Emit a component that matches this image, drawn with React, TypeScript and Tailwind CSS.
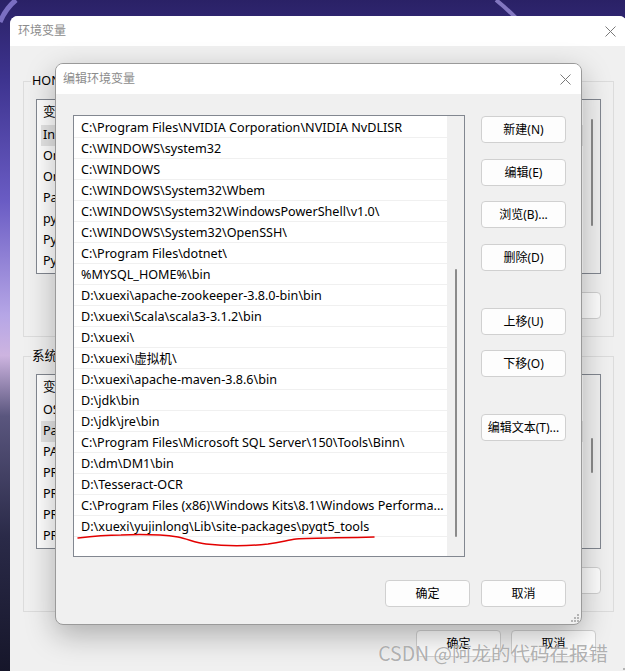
import React from "react"

const paths = [
  "C:\\Program Files\\NVIDIA Corporation\\NVIDIA NvDLISR",
  "C:\\WINDOWS\\system32",
  "C:\\WINDOWS",
  "C:\\WINDOWS\\System32\\Wbem",
  "C:\\WINDOWS\\System32\\WindowsPowerShell\\v1.0\\",
  "C:\\WINDOWS\\System32\\OpenSSH\\",
  "C:\\Program Files\\dotnet\\",
  "%MYSQL_HOME%\\bin",
  "D:\\xuexi\\apache-zookeeper-3.8.0-bin\\bin",
  "D:\\xuexi\\Scala\\scala3-3.1.2\\bin",
  "D:\\xuexi\\",
  "D:\\xuexi\\虚拟机\\",
  "D:\\xuexi\\apache-maven-3.8.6\\bin",
  "D:\\jdk\\bin",
  "D:\\jdk\\jre\\bin",
  "C:\\Program Files\\Microsoft SQL Server\\150\\Tools\\Binn\\",
  "D:\\dm\\DM1\\bin",
  "D:\\Tesseract-OCR",
  "C:\\Program Files (x86)\\Windows Kits\\8.1\\Windows Performa...",
  "D:\\xuexi\\yujinlong\\Lib\\site-packages\\pyqt5_tools",
]

const userVars = ["IntelliJ IDEA", "OneDrive", "OneDriveConsumer", "Path", "pycharm", "PyCharm", "PyCharm Community Edition"]
const sysVars = ["OS", "Path", "PATHEXT", "PROCESSOR_ARCHITECTURE", "PROCESSOR_IDENTIFIER", "PROCESSOR_LEVEL", "PROCESSOR_REVISION"]

function CloseIcon() {
  return (
    <svg width="11" height="11" viewBox="0 0 11 11">
      <path d="M0.5 0.5 L10.5 10.5 M10.5 0.5 L0.5 10.5" stroke="#7a7a7a" strokeWidth="1" />
    </svg>
  )
}

function Grip() {
  const dots = [
    [6, 0],
    [6, 3],
    [3, 3],
    [6, 6],
    [3, 6],
    [0, 6],
  ]
  return (
    <svg width="8" height="8" viewBox="0 0 8 8">
      {dots.map(([x, y], i) => (
        <rect key={i} x={x} y={y} width="2" height="2" fill="#b4b4b4" />
      ))}
    </svg>
  )
}

function Btn({ label, className = "" }: { label: string; className?: string }) {
  return (
    <div
      className={`flex h-[27px] w-[85px] shrink-0 items-center justify-center rounded-[4px] border border-[#d0d0d0] bg-[#fdfdfd] text-[12px] text-black ${className}`}
    >
      {label}
    </div>
  )
}

// variable list of the outer (background) window
function VarList({ items, selected, thumbTop, thumbHeight }: { items: string[]; selected: number; thumbTop: string; thumbHeight: string }) {
  return (
    <div className="flex h-[175px] border border-[#828790] bg-white">
      <div className="flex-1 overflow-hidden">
        <div className="flex h-[25px] items-center pl-[6px] text-[12.6px]">
          <span className="w-[200px]">变量</span>
          <span>值</span>
        </div>
        {items.map((v, i) => (
          <div
            key={v}
            className={`ml-[4px] flex h-[21px] items-center pl-[2px] text-[12.6px] ${i === selected ? "bg-[#e5e5e5]" : ""}`}
          >
            {v}
          </div>
        ))}
      </div>
      <div className="flex w-[17px] flex-col items-center bg-[#f0f0f0]">
        <div className={`w-[2px] rounded-full bg-[#8b8b8b] ${thumbTop} ${thumbHeight}`} />
      </div>
    </div>
  )
}

function GroupBox({ label, children }: { label: string; children: React.ReactNode }) {
  return (
    <div className="relative border border-[#dcdcdc] px-[12px] pb-[17px] pt-[17px]">
      <span className="absolute -top-[9px] left-[7px] bg-[#f0f0f0] px-[1px] text-[12.6px] leading-[16px] text-black">{label}</span>
      {children}
    </div>
  )
}

export default function App() {
  return (
    <div className="relative h-[671px] w-[625px] overflow-hidden bg-[linear-gradient(to_bottom,#2a2166_0%,#3e3490_12%,#6a5cc4_30%,#b6a6e6_47%,#cdb4e0_53%,#5a567e_62%,#2a2a48_80%,#16162a_100%)] font-['Noto_Sans','Noto_Sans_CJK_SC',sans-serif]">
      {/* wallpaper streaks */}
      <svg className="absolute left-0 top-0" width="625" height="40" viewBox="0 0 625 40">
        <path d="M0 22 Q6 8 16 0" stroke="#8f82d8" strokeWidth="5" fill="none" opacity="0.8" />
        <path d="M496 0 Q506 8 516 18" stroke="#a89be6" strokeWidth="4" fill="none" opacity="0.7" />
      </svg>

      {/* outer window: 环境变量 */}
      <div className="relative ml-[10px] mt-[16px] h-[660px] w-[617px] overflow-hidden rounded-t-[8px] bg-[#f0f0f0]">
        <div className="flex h-[30px] items-center justify-between bg-white pl-[8px] pr-[11px]">
          <span className="text-[12px] text-[#8c8c8c]">环境变量</span>
          <CloseIcon />
        </div>
        <div className="px-[13px] pt-[35px]">
          <GroupBox label="HONOR 的用户变量(U)">
            <VarList items={userVars} selected={0} thumbTop="mt-[19px]" thumbHeight="h-[107px]" />
            <div className="mt-[18px] flex justify-end gap-[10px]">
              <Btn label="新建(N)..." className="h-[26px]" />
              <Btn label="编辑(E)..." className="h-[26px]" />
              <Btn label="删除(D)" className="h-[26px]" />
            </div>
          </GroupBox>
          <div className="mt-[19px]">
            <GroupBox label="系统变量(S)">
              <VarList items={sysVars} selected={1} thumbTop="mt-[63px]" thumbHeight="h-[35px]" />
              <div className="mt-[18px] flex justify-end gap-[10px]">
                <Btn label="新建(W)..." className="h-[26px]" />
                <Btn label="编辑(I)..." className="h-[26px]" />
                <Btn label="删除(L)" className="h-[26px]" />
              </div>
            </GroupBox>
          </div>
          <div className="mt-[18px] flex justify-end gap-[10px] pr-[18px]">
            <Btn label="确定" />
            <Btn label="取消" />
          </div>
        </div>
        <div className="absolute bottom-[0px] right-[2px]">
          <Grip />
        </div>
      </div>

      {/* edit dialog: 编辑环境变量 */}
      <div className="absolute left-[55px] top-[63px] flex h-[562px] w-[527px] flex-col overflow-hidden rounded-[8px] border border-[#9a9a9a] bg-[#f0f0f0] shadow-[0_10px_30px_rgba(0,0,0,0.28)]">
        <div className="flex h-[30px] shrink-0 items-center justify-between bg-white pl-[7px] pr-[10px]">
          <span className="text-[12px] text-[#8c8c8c]">编辑环境变量</span>
          <CloseIcon />
        </div>
        <div className="flex flex-1 flex-col pl-[17px] pr-[15px] pt-[21px]">
          <div className="flex gap-[16px]">
            <div className="relative flex h-[442px] w-[392px] border border-[#828790] bg-white">
              <div className="flex-1 overflow-hidden pt-[1px]">
                {paths.map((p) => (
                  <div
                    key={p}
                    className="h-[21px] overflow-hidden whitespace-nowrap border-b border-[#f0f0f0] pl-[7px] text-[12.6px] leading-[22px] text-black"
                  >
                    {p}
                  </div>
                ))}
              </div>
              <div className="flex w-[17px] flex-col items-center bg-[#f0f0f0]">
                <div className="mt-[153px] h-[268px] w-[2px] rounded-full bg-[#8b8b8b]" />
              </div>
              {/* hand-drawn red underline */}
              <svg className="absolute left-0 top-0" width="390" height="440" viewBox="0 0 390 440">
                <path
                  d="M4 422 C20 420 35 419 47 419 C70 418 90 419 104 421 C114 423 122 427 132 428 C150 430 175 430 194 428 C208 426 214 424 222 423 C240 422 262 422 300 421"
                  stroke="#e30000"
                  strokeWidth="1.5"
                  fill="none"
                  strokeLinecap="round"
                />
              </svg>
            </div>
            <div className="flex flex-col pt-[1px]">
              <Btn label="新建(N)" />
              <Btn label="编辑(E)" className="mt-[16px]" />
              <Btn label="浏览(B)..." className="mt-[15px]" />
              <Btn label="删除(D)" className="mt-[16px]" />
              <Btn label="上移(U)" className="mt-[37px]" />
              <Btn label="下移(O)" className="mt-[15px]" />
              <Btn label="编辑文本(T)..." className="mt-[37px]" />
            </div>
          </div>
          <div className="mt-[23px] flex justify-end gap-[11px]">
            <Btn label="确定" />
            <Btn label="取消" />
          </div>
        </div>
        <div className="absolute bottom-[2px] right-[2px]">
          <Grip />
        </div>
      </div>

      {/* watermark */}
      <div className="absolute bottom-[6px] right-[17px] font-['Noto_Sans_CJK_SC',sans-serif] text-[19.5px] leading-[24px] text-[rgba(110,110,110,0.55)] [text-shadow:0_0_1px_rgba(255,255,255,0.9)]">
        CSDN @阿龙的代码在报错
      </div>
    </div>
  )
}
